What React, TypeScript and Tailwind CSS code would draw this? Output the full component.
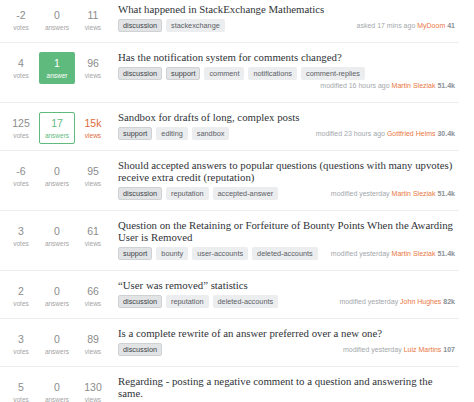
import React from 'react';

type Question = {
  votes: string;
  answers: string;
  answerState: 'none' | 'answered' | 'accepted';
  views: string;
  hot?: boolean;
  title: string;
  tags: string[];
  when: string;
  user: string;
  rep: string;
};

const REQUIRED = ['discussion', 'support'];

const questions: Question[] = [
  {
    votes: '-2',
    answers: '0',
    answerState: 'none',
    views: '11',
    title: 'What happened in StackExchange Mathematics',
    tags: ['discussion', 'stackexchange'],
    when: 'asked 17 mins ago',
    user: 'MyDoom',
    rep: '41',
  },
  {
    votes: '4',
    answers: '1',
    answerState: 'accepted',
    views: '96',
    title: 'Has the notification system for comments changed?',
    tags: ['discussion', 'support', 'comment', 'notifications', 'comment-replies'],
    when: 'modified 16 hours ago',
    user: 'Martin Sleziak',
    rep: '51.4k',
  },
  {
    votes: '125',
    answers: '17',
    answerState: 'answered',
    views: '15k',
    hot: true,
    title: 'Sandbox for drafts of long, complex posts',
    tags: ['support', 'editing', 'sandbox'],
    when: 'modified 23 hours ago',
    user: 'Gottfried Helms',
    rep: '30.4k',
  },
  {
    votes: '-6',
    answers: '0',
    answerState: 'none',
    views: '95',
    title:
      'Should accepted answers to popular questions (questions with many upvotes) receive extra credit (reputation)',
    tags: ['discussion', 'reputation', 'accepted-answer'],
    when: 'modified yesterday',
    user: 'Martin Sleziak',
    rep: '51.4k',
  },
  {
    votes: '3',
    answers: '0',
    answerState: 'none',
    views: '61',
    title:
      'Question on the Retaining or Forfeiture of Bounty Points When the Awarding User is Removed',
    tags: ['support', 'bounty', 'user-accounts', 'deleted-accounts'],
    when: 'modified yesterday',
    user: 'Martin Sleziak',
    rep: '51.4k',
  },
  {
    votes: '2',
    answers: '0',
    answerState: 'none',
    views: '66',
    title: '\u201cUser was removed\u201d statistics',
    tags: ['discussion', 'reputation', 'deleted-accounts'],
    when: 'modified yesterday',
    user: 'John Hughes',
    rep: '82k',
  },
  {
    votes: '3',
    answers: '0',
    answerState: 'none',
    views: '89',
    title: 'Is a complete rewrite of an answer preferred over a new one?',
    tags: ['discussion'],
    when: 'modified yesterday',
    user: 'Luiz Martins',
    rep: '107',
  },
  {
    votes: '5',
    answers: '0',
    answerState: 'none',
    views: '130',
    title: 'Regarding - posting a negative comment to a question and answering the same.',
    tags: ['discussion', 'comments'],
    when: 'modified yesterday',
    user: 'Martin Sleziak',
    rep: '51.4k',
  },
];

const Stat: React.FC<{ value: string; label: string; className?: string; labelClass?: string }> = ({
  value,
  label,
  className = '',
  labelClass = '',
}) => (
  <div className={`flex h-[32px] w-[36px] flex-col items-center justify-center ${className}`}>
    <span className="text-[10.5px] leading-[12px]">{value}</span>
    <span className={`mt-[2px] text-[6.5px] leading-[9px] ${labelClass}`}>{label}</span>
  </div>
);

const Tag: React.FC<{ name: string }> = ({ name }) => {
  const required = REQUIRED.includes(name);
  return (
    <span
      className={`inline-flex h-[13px] items-center rounded-[2px] px-[4px] text-[7.3px] leading-none ${
        required
          ? 'border border-[#cfd2d4] bg-[#e1e3e5] text-[#3e4449]'
          : 'border border-transparent bg-[#ecedee] text-[#5a6067]'
      }`}
    >
      {name}
    </span>
  );
};

const QuestionRow: React.FC<{ q: Question }> = ({ q }) => {
  const answerBox =
    q.answerState === 'accepted'
      ? 'rounded-[2px] bg-[#5fba7d] text-white'
      : q.answerState === 'answered'
      ? 'rounded-[2px] border border-[#5fba7d] text-[#5fba7d]'
      : 'text-[#8c8c8c]';

  return (
    <div className="flex border-b border-[#ededed] pr-[4px]">
      <div className="flex pl-[3px] pt-[9px]">
        <Stat value={q.votes} label="votes" className="w-[35px] text-[#8c8c8c]" labelClass="text-[#a4a4a4]" />
        <Stat
          value={q.answers}
          label={q.answers === '1' ? 'answer' : 'answers'}
          className={answerBox}
          labelClass={q.answerState === 'none' ? 'text-[#a4a4a4]' : ''}
        />
        <Stat
          value={q.views}
          label="views"
          className={q.hot ? 'text-[#de6b3d]' : 'text-[#8c8c8c]'}
          labelClass={q.hot ? '' : 'text-[#a4a4a4]'}
        />
      </div>
      <div className="ml-[7px] min-w-0 flex-1 pb-[10px] pt-[8px]">
        <h3 className="font-['Liberation_Serif',serif] text-[10.8px] leading-[12px] text-[#2f3337]">
          {q.title}
        </h3>
        <div className="mt-[4px] flex flex-wrap items-center justify-between">
          <div className="flex gap-[4px]">
            {q.tags.map((t) => (
              <Tag key={t} name={t} />
            ))}
          </div>
          <div className="ml-auto whitespace-nowrap pl-[4px] text-[7px] leading-[12px] text-[#a3a7ab]">
            {q.when} <span className="text-[#e9773f]">{q.user}</span>{' '}
            <span className="font-bold text-[#8a9096]">{q.rep}</span>
          </div>
        </div>
      </div>
    </div>
  );
};

const App: React.FC = () => {
  return (
    <div className="h-[402px] w-[474px] overflow-hidden bg-white font-['Liberation_Sans',Arial,sans-serif]">
      <div className="-mt-[5px] w-[459px]">
        {questions.map((q, i) => (
          <QuestionRow key={i} q={q} />
        ))}
      </div>
    </div>
  );
};

export default App;
